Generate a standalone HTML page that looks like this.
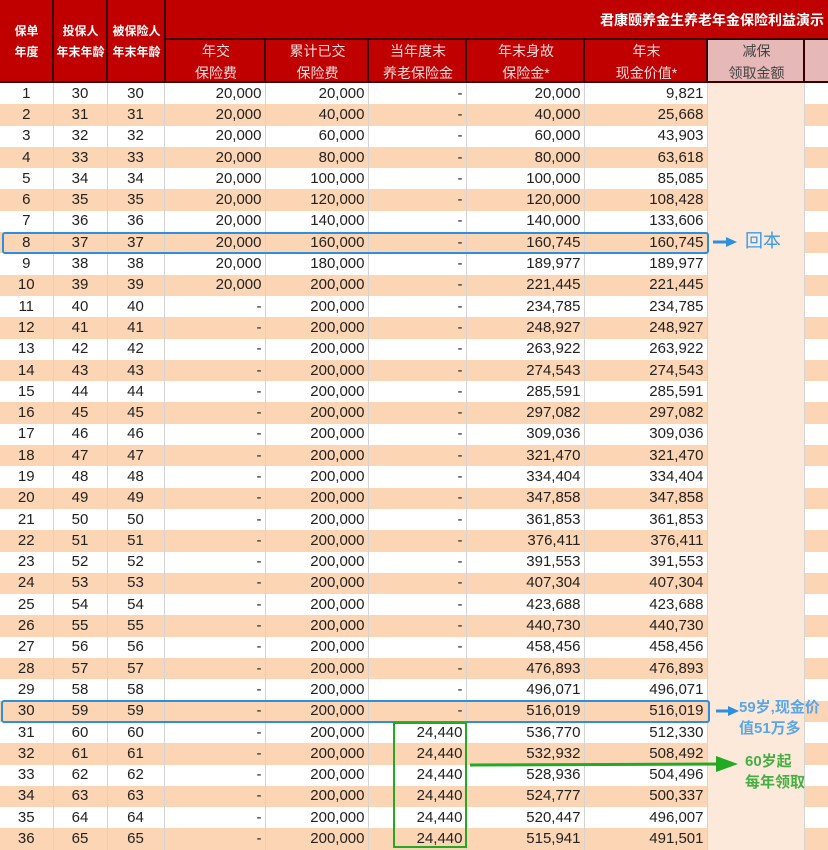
<!DOCTYPE html>
<html><head><meta charset="utf-8">
<style>
*{margin:0;padding:0;box-sizing:border-box}
body{width:828px;height:850px;overflow:hidden;background:#fff;position:relative;font-family:"Liberation Sans","Noto Sans CJK SC",sans-serif;}
.h{position:absolute;background:#c00000;color:#fff;display:flex;align-items:center;justify-content:center;text-align:center;border-left:2px solid #3a0000;line-height:22px}
.hb{font-weight:bold;font-size:12px;line-height:21px}
.hn{font-size:14px;color:#f4dcdc;border-top:2px solid #3a0000}
table{position:absolute;left:0;top:83px;border-collapse:collapse;table-layout:fixed;width:828px;font-size:15px;color:#222}
td{height:21.3px;padding:0 3px 0 0;text-align:right;border-right:1px solid #d4d4d4;white-space:nowrap;line-height:20px}
td:nth-child(-n+3){text-align:center;padding:0}
tr:nth-child(even) td{background:#fcd5b4}
td:nth-child(9){background:#fde9d9 !important}
td:nth-child(10){border-right:none}
.box{position:absolute;border:2px solid #2e8fe0;border-radius:3px}
.g{position:absolute;border:2.5px solid #22aa22}
.lab{position:absolute;font-size:15px;line-height:20px}
</style></head><body>
<div class="h hb" style="left:0;top:0;width:53px;height:83px;border-left:none">保单<br>年度</div>
<div class="h hb" style="left:52px;top:0;width:55px;height:83px">投保人<br>年末年龄</div>
<div class="h hb" style="left:106px;top:0;width:59px;height:83px">被保险人<br>年末年龄</div>
<div class="h" style="left:164px;top:0;width:664px;height:40px;justify-content:flex-end;padding-right:4px;font-weight:bold;font-size:14px">君康颐养金生养老年金保险利益演示</div>
<div class="h hn" style="left:164px;top:38px;width:102px;height:45px">年交<br>保险费</div>
<div class="h hn" style="left:264px;top:38px;width:105px;height:45px">累计已交<br>保险费</div>
<div class="h hn" style="left:367px;top:38px;width:100px;height:45px">当年度末<br>养老保险金</div>
<div class="h hn" style="left:465px;top:38px;width:120px;height:45px">年末身故<br>保险金*</div>
<div class="h hn" style="left:583px;top:38px;width:125px;height:45px">年末<br>现金价值*</div>
<div class="h hn" style="left:706px;top:38px;width:99px;height:45px;background:#e6b8b7;color:#444">减保<br>领取金额</div>
<div class="h hn" style="left:803px;top:38px;width:25px;height:45px;background:#e6b8b7"></div>
<div style="position:absolute;left:0;top:81px;width:828px;height:2px;background:#3a0000"></div>
<table>
<colgroup><col style="width:53px"><col style="width:54px"><col style="width:57px"><col style="width:101px"><col style="width:103px"><col style="width:98px"><col style="width:118px"><col style="width:123px"><col style="width:97px"><col style="width:24px"></colgroup>
<tr><td>1</td><td>30</td><td>30</td><td>20,000</td><td>20,000</td><td>-</td><td>20,000</td><td>9,821</td><td></td><td></td></tr>
<tr><td>2</td><td>31</td><td>31</td><td>20,000</td><td>40,000</td><td>-</td><td>40,000</td><td>25,668</td><td></td><td></td></tr>
<tr><td>3</td><td>32</td><td>32</td><td>20,000</td><td>60,000</td><td>-</td><td>60,000</td><td>43,903</td><td></td><td></td></tr>
<tr><td>4</td><td>33</td><td>33</td><td>20,000</td><td>80,000</td><td>-</td><td>80,000</td><td>63,618</td><td></td><td></td></tr>
<tr><td>5</td><td>34</td><td>34</td><td>20,000</td><td>100,000</td><td>-</td><td>100,000</td><td>85,085</td><td></td><td></td></tr>
<tr><td>6</td><td>35</td><td>35</td><td>20,000</td><td>120,000</td><td>-</td><td>120,000</td><td>108,428</td><td></td><td></td></tr>
<tr><td>7</td><td>36</td><td>36</td><td>20,000</td><td>140,000</td><td>-</td><td>140,000</td><td>133,606</td><td></td><td></td></tr>
<tr><td>8</td><td>37</td><td>37</td><td>20,000</td><td>160,000</td><td>-</td><td>160,745</td><td>160,745</td><td></td><td></td></tr>
<tr><td>9</td><td>38</td><td>38</td><td>20,000</td><td>180,000</td><td>-</td><td>189,977</td><td>189,977</td><td></td><td></td></tr>
<tr><td>10</td><td>39</td><td>39</td><td>20,000</td><td>200,000</td><td>-</td><td>221,445</td><td>221,445</td><td></td><td></td></tr>
<tr><td>11</td><td>40</td><td>40</td><td>-</td><td>200,000</td><td>-</td><td>234,785</td><td>234,785</td><td></td><td></td></tr>
<tr><td>12</td><td>41</td><td>41</td><td>-</td><td>200,000</td><td>-</td><td>248,927</td><td>248,927</td><td></td><td></td></tr>
<tr><td>13</td><td>42</td><td>42</td><td>-</td><td>200,000</td><td>-</td><td>263,922</td><td>263,922</td><td></td><td></td></tr>
<tr><td>14</td><td>43</td><td>43</td><td>-</td><td>200,000</td><td>-</td><td>274,543</td><td>274,543</td><td></td><td></td></tr>
<tr><td>15</td><td>44</td><td>44</td><td>-</td><td>200,000</td><td>-</td><td>285,591</td><td>285,591</td><td></td><td></td></tr>
<tr><td>16</td><td>45</td><td>45</td><td>-</td><td>200,000</td><td>-</td><td>297,082</td><td>297,082</td><td></td><td></td></tr>
<tr><td>17</td><td>46</td><td>46</td><td>-</td><td>200,000</td><td>-</td><td>309,036</td><td>309,036</td><td></td><td></td></tr>
<tr><td>18</td><td>47</td><td>47</td><td>-</td><td>200,000</td><td>-</td><td>321,470</td><td>321,470</td><td></td><td></td></tr>
<tr><td>19</td><td>48</td><td>48</td><td>-</td><td>200,000</td><td>-</td><td>334,404</td><td>334,404</td><td></td><td></td></tr>
<tr><td>20</td><td>49</td><td>49</td><td>-</td><td>200,000</td><td>-</td><td>347,858</td><td>347,858</td><td></td><td></td></tr>
<tr><td>21</td><td>50</td><td>50</td><td>-</td><td>200,000</td><td>-</td><td>361,853</td><td>361,853</td><td></td><td></td></tr>
<tr><td>22</td><td>51</td><td>51</td><td>-</td><td>200,000</td><td>-</td><td>376,411</td><td>376,411</td><td></td><td></td></tr>
<tr><td>23</td><td>52</td><td>52</td><td>-</td><td>200,000</td><td>-</td><td>391,553</td><td>391,553</td><td></td><td></td></tr>
<tr><td>24</td><td>53</td><td>53</td><td>-</td><td>200,000</td><td>-</td><td>407,304</td><td>407,304</td><td></td><td></td></tr>
<tr><td>25</td><td>54</td><td>54</td><td>-</td><td>200,000</td><td>-</td><td>423,688</td><td>423,688</td><td></td><td></td></tr>
<tr><td>26</td><td>55</td><td>55</td><td>-</td><td>200,000</td><td>-</td><td>440,730</td><td>440,730</td><td></td><td></td></tr>
<tr><td>27</td><td>56</td><td>56</td><td>-</td><td>200,000</td><td>-</td><td>458,456</td><td>458,456</td><td></td><td></td></tr>
<tr><td>28</td><td>57</td><td>57</td><td>-</td><td>200,000</td><td>-</td><td>476,893</td><td>476,893</td><td></td><td></td></tr>
<tr><td>29</td><td>58</td><td>58</td><td>-</td><td>200,000</td><td>-</td><td>496,071</td><td>496,071</td><td></td><td></td></tr>
<tr><td>30</td><td>59</td><td>59</td><td>-</td><td>200,000</td><td>-</td><td>516,019</td><td>516,019</td><td></td><td></td></tr>
<tr><td>31</td><td>60</td><td>60</td><td>-</td><td>200,000</td><td>24,440</td><td>536,770</td><td>512,330</td><td></td><td></td></tr>
<tr><td>32</td><td>61</td><td>61</td><td>-</td><td>200,000</td><td>24,440</td><td>532,932</td><td>508,492</td><td></td><td></td></tr>
<tr><td>33</td><td>62</td><td>62</td><td>-</td><td>200,000</td><td>24,440</td><td>528,936</td><td>504,496</td><td></td><td></td></tr>
<tr><td>34</td><td>63</td><td>63</td><td>-</td><td>200,000</td><td>24,440</td><td>524,777</td><td>500,337</td><td></td><td></td></tr>
<tr><td>35</td><td>64</td><td>64</td><td>-</td><td>200,000</td><td>24,440</td><td>520,447</td><td>496,007</td><td></td><td></td></tr>
<tr><td>36</td><td>65</td><td>65</td><td>-</td><td>200,000</td><td>24,440</td><td>515,941</td><td>491,501</td><td></td><td></td></tr>
</table>
<div class="box" style="left:2px;top:232px;width:707px;height:22px"></div>
<div class="box" style="left:1px;top:700px;width:709px;height:23px"></div>
<div class="g" style="left:393px;top:722px;width:74px;height:126px"></div>
<svg style="position:absolute;left:0;top:0" width="828" height="850">
<path d="M713 242 L728 242" stroke="#2e8fe0" stroke-width="3"/><path d="M726 237 L737 242 L726 247 Z" fill="#2e8fe0"/>
<path d="M716 711 L730 711" stroke="#2e8fe0" stroke-width="3"/><path d="M728 706 L739 711 L728 716 Z" fill="#2e8fe0"/>
<path d="M470 765 L722 764" stroke="#22aa22" stroke-width="3"/><path d="M716 756 L738 764 L716 772 Z" fill="#22aa22"/>
</svg>
<div class="lab" style="left:745px;top:231px;color:#3a9ae6;font-size:18px">回本</div>
<div class="lab" style="left:739px;top:697px;color:#5aa6e6;font-size:15px;line-height:21px;font-weight:bold">59岁,现金价<br>值51万多</div>
<div class="lab" style="left:745px;top:751px;color:#44b044;font-size:15px;line-height:21px;font-weight:bold">60岁起<br>每年领取</div>
</body></html>
